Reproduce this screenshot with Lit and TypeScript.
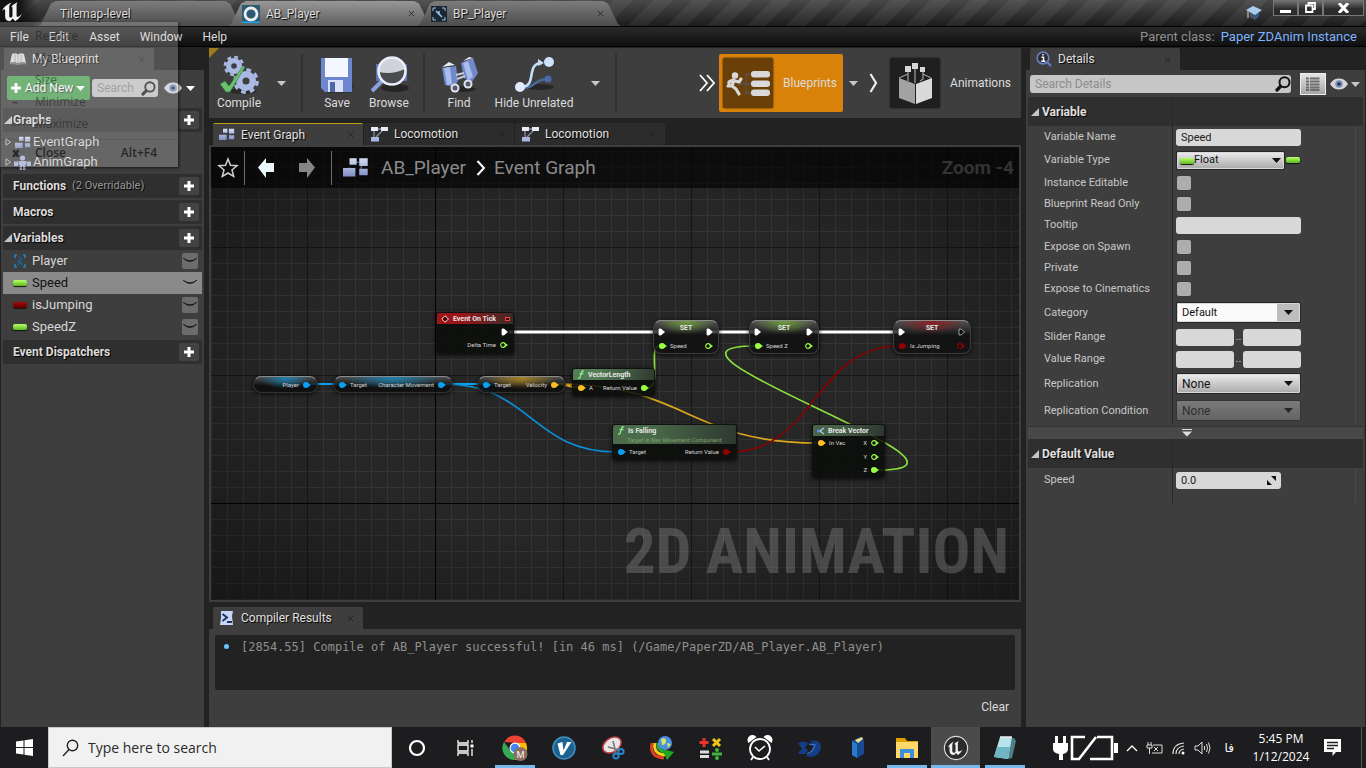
import { LitElement, html, svg, css, nothing } from 'lit';
import { customElement } from 'lit/decorators.js';
import { classMap } from 'lit/directives/class-map.js';

/* ---------- icons ---------- */
const unreal = (s: number) => html`<svg width=${s} height=${s} viewBox="0 0 24 24" aria-hidden="true"><path fill="#f2f2f2" d="M1 11C3 6 7 3 12 1.500C9.500 3.500 9 4.500 9 6V16.500C9 18 10.300 18.600 11.500 17.600L12.500 16.600V7.500C12.500 6 11.500 6 10.800 6.500C12.500 4 15.500 3 18 1C17 3 17 4 17 6V16C17 17.500 18.500 17.700 20 16.500L23 14C20.500 18.500 18 20.500 15.500 22L12.800 19.200L10 22C6.500 22 4.500 20 4.500 16.500V10C4.500 8.500 3 9 1 11Z"/></svg>`;
const plus = html`<svg width="12" height="12" viewBox="0 0 12 12" aria-hidden="true"><path fill="#fff" d="M4.500 1h3v3.500H11v3H7.500V11h-3V7.500H1v-3h3.500z"/></svg>`;
const caret = (c = '#c8c8c8') => html`<svg width="9" height="5" viewBox="0 0 9 5" aria-hidden="true"><path fill=${c} d="M0 0h9L4.500 5z"/></svg>`;
const tri = html`<svg width="8" height="8" viewBox="0 0 8 8" aria-hidden="true"><path fill="#c4c4c4" d="M8 0v8H0z"/></svg>`;
const lens = (s: number, c: string) => html`<svg width=${s} height=${s} viewBox="0 0 16 16" aria-hidden="true"><circle cx="9.500" cy="6.300" r="5" fill="none" stroke=${c} stroke-width="2"/><path d="M5.500 10.500L2 14" stroke=${c} stroke-width="3.200" stroke-linecap="round"/></svg>`;
const eye = html`<svg width="18" height="12" viewBox="0 0 18 12" aria-hidden="true"><path fill="#d6d6d6" d="M0 6C3 1.500 6 .5 9 .5s6 1 9 5.500c-3 4.500-6 5.500-9 5.500S3 10.500 0 6z"/><circle cx="9" cy="6" r="3.800" fill="#7d8fc0"/><circle cx="9" cy="6" r="1.800" fill="#2b3245"/></svg>`;
const closedEye = html`<svg width="14" height="6" viewBox="0 0 14 6" aria-hidden="true"><path d="M0 0Q7 7 14 0Q7 5.500 0 0z" fill="#111" stroke="#111" stroke-width=".6"/></svg>`;
const x = html`<svg width="7" height="7" viewBox="0 0 7 7" aria-hidden="true"><path d="M1 1l5 5M6 1L1 6" stroke="#1a1a1a" stroke-opacity=".75"/></svg>`;
const graphIcon = (w: number) => html`<svg width=${w} height=${w * 0.8} viewBox="0 0 20 16" aria-hidden="true"><defs><linearGradient id="gi" x2="0" y2="1"><stop stop-color="#d5dcf3"/><stop offset="1" stop-color="#7f8fc6"/></linearGradient></defs><path d="M8 4h6M14 6v5M5 8v3" stroke="#5b678f"/><g fill="url(#gi)"><path d="M5 1h5.500v5H5zM12.500 1H19v6h-6.500zM0 8.500h9.500V15H0zM12.500 9H19v5h-6.500z"/></g></svg>`;
const machineIcon = html`<svg width="18" height="16" viewBox="0 0 18 16" aria-hidden="true"><path d="M4 5v6M6 11l6-6M5 3h8" stroke="#8a8f9e" stroke-width="1.300"/><path fill="#e8ecf6" d="M1 1h7v4H1zM11 1h7v4h-7z"/><path fill="#a9b6df" d="M1 11h8v4.500H1z"/></svg>`;
const personIcon = html`<svg width="17" height="15" viewBox="0 0 17 15" aria-hidden="true"><g fill="#a9b4d8"><circle cx="8.500" cy="3" r="2.600"/><path d="M4.500 6h8v4h-1.200v5H9V11H8v4H5.700v-5H4.500zM0 6.500h4V11H0zM13 6.500h4V11h-4z"/></g></svg>`;
const bookIcon = html`<svg width="16" height="14" viewBox="0 0 16 14" aria-hidden="true"><path fill="#dcdcdc" d="M2 2q3-1.500 6 .5Q11 .5 14 2l2 9q-4-1.500-8 .5Q4 9.500 0 11z"/><path d="M5 2v8M8 3v8M11 2v8" stroke="#9a9a9a" stroke-width=".8"/><path fill="#777" d="M0 11q4-1.500 8 .5 4-2 8-.5v1.500q-4-1-8 .8-4-1.800-8-.8z"/></svg>`;
const playerIcon = html`<svg width="14" height="14" viewBox="0 0 14 14" aria-hidden="true"><path d="M2 4V1h2M10 1h2v3M12 10v3h-2M4 13H2v-3" fill="none" stroke="#1c9be6" stroke-width="1.200"/><path d="M6 3l2 2-1 3 3 3M4 8l3-1M5 11l2-2" stroke="#17628f" stroke-width="1.600" fill="none"/></svg>`;
const cap = html`<svg width="16" height="16" viewBox="0 0 16 16" aria-hidden="true"><path fill="#3b5878" d="M4 7v5l5 3 4-4V7z"/><path fill="#a9cdee" d="M0 5l7-4 9 4-7 5z"/><path d="M2 5.500V13" stroke="#d6b178" stroke-width="1.300"/></svg>`;
const detailsIcon = html`<svg width="16" height="16" viewBox="0 0 16 16" aria-hidden="true"><circle cx="7" cy="7" r="5.800" fill="#2b2b30" stroke="#6c7fc0" stroke-width="1.700"/><path d="M11.500 11.500L15 15" stroke="#5b78d0" stroke-width="2.400"/><path d="M7 3v1.600M5.500 6.300H7.500V10M5.300 10.300h4" stroke="#fff" stroke-width="1.500"/></svg>`;
const listIcon = html`<svg width="14" height="14" viewBox="0 0 14 14" aria-hidden="true"><path d="M0 1.500h3M4 1.500h9.500M0 4.500h3M4 4.500h9.500M0 7.500h3M4 7.500h9.500M0 10.500h3M4 10.500h9.500M0 13h3M4 13h9.500" stroke="#6e6e6e" stroke-width="1.800"/></svg>`;
const scriptIcon = html`<svg width="16" height="16" viewBox="0 0 16 16" aria-hidden="true"><path fill="#c7d6f7" d="M2 1h12l-1 5 1 9H1l1-7z"/><path d="M3.500 4L8 7.500 3.500 11" fill="none" stroke="#22335c" stroke-width="2"/><path d="M8 12h5" stroke="#22335c" stroke-width="2"/></svg>`;

const gear = (cx: number, cy: number, r: number) => svg`<g><circle cx=${cx} cy=${cy} r=${r * 0.54} fill="none" stroke="#aab8e4" stroke-width=${r * 0.52}/><circle cx=${cx} cy=${cy} r=${r * 0.9} fill="none" stroke="#aab8e4" stroke-width=${r * 0.26} stroke-dasharray="${r * 0.38} ${r * 0.3269}"/></g>`;
const compileIcon = html`<svg width="40" height="40" viewBox="0 0 40 40" aria-hidden="true"><ellipse cx="24" cy="36" rx="14" ry="3" fill="#1d1d1d" opacity=".6"/>${gear(15, 11, 10)}${gear(27, 26, 12.5)}<path fill="#6cc36f" stroke="#2f6f38" stroke-width=".6" d="M1 29l5-3 4 5L24 11l2 1L11 37H7z"/></svg>`;
const saveIcon = html`<svg width="36" height="40" viewBox="0 0 36 40" aria-hidden="true"><path fill="#222" opacity=".5" d="M8 30h28l-5 8H8z"/><path fill="#6d87cf" d="M2 3h31v34H6l-4-4z"/><path fill="#f4f7ff" d="M6 3h23v19H6z"/><path fill="#dbe2f5" d="M9 25h15v12H9z"/><path fill="#5068ab" d="M11 27h5v10h-5z"/></svg>`;
const browseIcon = html`<svg width="42" height="40" viewBox="0 0 42 40" aria-hidden="true"><ellipse cx="27" cy="33" rx="14" ry="4" fill="#1d1d1d" opacity=".7"/><path fill="#5c74b7" d="M8 9h31v17H8z"/><path d="M14 26L4 36" stroke="#8aa0dd" stroke-width="4"/><circle cx="24" cy="16" r="13.500" fill="#4b4c50"/><path fill="#cfd2da" d="M11 17a13 13 0 0 1 26-3Q24 20 11 17z"/><circle cx="24" cy="16" r="13.500" fill="none" stroke="#e9eefb" stroke-width="2.600"/></svg>`;
const findIcon = html`<svg width="40" height="40" viewBox="0 0 40 40" aria-hidden="true"><ellipse cx="24" cy="34" rx="13" ry="3" fill="#1d1d1d" opacity=".7"/><path fill="#7089c9" d="M3 13l14-2 2 15-4 6-9-2zM22 8l12-5 5 15-6 9-8-4z"/><path fill="#a9bdec" d="M5 13l6-1 2 17-5 1zM24 8l5-2 5 16-5 3z"/><path fill="#e8ebf5" d="M3 12l7-5 6 3zM24 6l6-4 4 1z"/><path d="M17 20l8-2M18 24l8-3" stroke="#c6cbe0" stroke-width="2"/><circle cx="16" cy="33" r="4.500" fill="#dfe3ef"/><circle cx="16" cy="33" r="2.500" fill="#555b6b"/><circle cx="29" cy="29" r="4.500" fill="#dfe3ef"/><circle cx="29" cy="29" r="2.500" fill="#555b6b"/></svg>`;
const hideIcon = html`<svg width="42" height="40" viewBox="0 0 42 40" aria-hidden="true"><ellipse cx="26" cy="32" rx="15" ry="3" fill="#1d1d1d" opacity=".7"/><path d="M10 33C22 33 20 25 34 24" fill="none" stroke="#4a6a96" stroke-width="2.500"/><circle cx="35" cy="24" r="3.600" fill="#4a68a8"/><path d="M8 32C25 32 12 8 29 8" fill="none" stroke="#c4ddf8" stroke-width="2.600"/><path d="M25 4l6 4-6 3z" fill="#c4ddf8"/><circle cx="7" cy="32" r="5" fill="#dfeafc"/><circle cx="36" cy="7" r="5" fill="#cfe2fc"/></svg>`;
const runIcon = html`<svg width="50" height="50" viewBox="0 0 50 50" aria-hidden="true"><path d="M15 26h8M28 16h-5v19h5M23 26h5" fill="none" stroke="#555" stroke-width="1.300"/><g fill="#d9d9d9"><circle cx="12" cy="17.500" r="3.200"/><rect x="28" y="13" width="19" height="6.500" rx="3"/><rect x="28" y="22.500" width="19" height="6.500" rx="3"/><rect x="28" y="31.500" width="19" height="6.500" rx="3"/></g><path d="M11 22l-2 6 4 3 3 5M9 28l-4 0M12 23l4 1 2-3M10 22l-4 2 0 3" fill="none" stroke="#d9d9d9" stroke-width="3.200" stroke-linecap="round" stroke-linejoin="round"/></svg>`;
const boxIcon = html`<svg width="50" height="50" viewBox="0 0 50 50" aria-hidden="true"><path d="M18 13v10M25 9v16M33 13v8l-3 2M9 20l9-4M41 20l-8-4" fill="none" stroke="#999" stroke-width="1.300"/><path fill="#d6d6d6" d="M15 8h6v6h-6zM22 5h6v6h-6zM30 9h5v5h-5z"/><path fill="#a2a2a2" d="M9 20l16 6v20L9 40z"/><path fill="#dadada" d="M42 20l-16 6v20l16-6z"/></svg>`;

/* ---------- graph data, in canvas coordinates ---------- */
type Pin = { kind: string; label?: string; color?: string; hollow?: boolean };
type Row = { left?: Pin; right?: Pin };
type Node = { id: string; type: 'pill' | 'set' | 'func'; x: number; y: number; w: number; h: number; tint: string; title?: string; sub?: string; icon?: string; rows: Row[] };
const BLUE = '#0aa0f0', YEL = '#fdc021', GRN = '#98ff45', RED = '#920101';
const v = (color: string, label = '', hollow = false): Pin => ({ kind: 'v', color, label, hollow });
const e = (hollow = false): Pin => ({ kind: 'e', hollow });
const nodes: Node[] = [
  { id: 'tick', type: 'func', x: 225, y: 165, w: 78, h: 42, tint: '#9c1519', title: 'Event On Tick', icon: 'event', rows: [{ right: e() }, { right: v(GRN, 'Delta Time', true) }] },
  { id: 'set1', type: 'set', x: 442, y: 173, w: 66, h: 34, tint: '#6f9f3c', title: 'SET', rows: [{ left: e(), right: e() }, { left: v(GRN, 'Speed'), right: v(GRN, '', true) }] },
  { id: 'set2', type: 'set', x: 538, y: 173, w: 70, h: 34, tint: '#6f9f3c', title: 'SET', rows: [{ left: e(), right: e() }, { left: v(GRN, 'Speed Z'), right: v(GRN, '', true) }] },
  { id: 'set3', type: 'set', x: 682, y: 173, w: 78, h: 34, tint: '#8b1d22', title: 'SET', rows: [{ left: e(), right: e(true) }, { left: v(RED, 'Is Jumping'), right: v(RED, '', true) }] },
  { id: 'player', type: 'pill', x: 42, y: 229, w: 65, h: 17, tint: '#1f7fae', rows: [{ right: v(BLUE, 'Player') }] },
  { id: 'move', type: 'pill', x: 122, y: 229, w: 120, h: 17, tint: '#1f7fae', rows: [{ left: v(BLUE, 'Target'), right: v(BLUE, 'Character Movement') }] },
  { id: 'vel', type: 'pill', x: 266, y: 229, w: 89, h: 17, tint: '#a88325', rows: [{ left: v(BLUE, 'Target'), right: v(YEL, 'Velocity') }] },
  { id: 'len', type: 'func', x: 361, y: 221, w: 83, h: 28, tint: '#557d55', title: 'VectorLength', icon: 'f', rows: [{ left: v(YEL, 'A'), right: v(GRN, 'Return Value') }] },
  { id: 'fall', type: 'func', x: 401, y: 277, w: 125, h: 36, tint: '#4a6c4a', title: 'Is Falling', sub: 'Target is Nav Movement Component', icon: 'f', rows: [{ left: v(BLUE, 'Target'), right: v(RED, 'Return Value') }] },
  { id: 'break', type: 'func', x: 601, y: 277, w: 73, h: 54, tint: '#486348', title: 'Break Vector', icon: 'break', rows: [{ left: v(YEL, 'In Vec'), right: v(GRN, 'X', true) }, { right: v(GRN, 'Y', true) }, { right: v(GRN, 'Z') }] },
];
const wires: [string, string, number][] = [
  ['M298 185H448', '#fff', 3], ['M502 185H545', '#fff', 3], ['M603 185H688', '#fff', 3],
  ['M100 237H127', BLUE, 2], ['M233 237H273', BLUE, 2],
  ['M233 237C320 237 320 305 406 305', '#0a8fd8', 1.7],
  ['M346 237C356 237 356 240 367 240', YEL, 2],
  ['M346 237C476 237 476 296 607 296', '#dba71c', 1.7],
  ['M437 241C451 241 437 199 448 199', '#8be03f', 1.7],
  ['M667 323C804 323 407 199 544 199', '#8be03f', 1.7],
  ['M519 305C604 305 604 199 688 199', '#840404', 1.7],
];

@customElement('graph-canvas')
class GraphCanvas extends LitElement {
  static styles = css`
    :host { display: block; position: relative; overflow: hidden; background-color: #262626; min-height: 0;
      background-image:
        radial-gradient(ellipse at center, transparent 55%, rgba(0,0,0,.42) 100%),
        linear-gradient(#000, #000), linear-gradient(#000, #000),
        repeating-linear-gradient(90deg, transparent 0 96px, #161616 96px 97px, transparent 97px 128px),
        repeating-linear-gradient(180deg, transparent 0 100px, #161616 100px 101px, transparent 101px 128px),
        repeating-linear-gradient(90deg, #343434 0 1px, transparent 1px 16px),
        repeating-linear-gradient(180deg, transparent 0 4px, #343434 4px 5px, transparent 5px 16px);
      background-size: auto, 1px 100%, 100% 1px, auto, auto, auto, auto;
      background-position: 0 0, 224px 0, 0 356px, 0 0, 0 0, 0 0, 0 0;
      background-repeat: no-repeat, no-repeat, no-repeat, repeat, repeat, repeat, repeat; }
    .wires { position: absolute; inset: 0; width: 100%; height: 100%; }
    .mark { position: absolute; right: 10px; bottom: 12px; font: 700 63px/72px "Roboto Condensed", "Liberation Sans Narrow", "Roboto", sans-serif; color: rgba(160,160,160,.32); white-space: nowrap; }
    .crumbs { position: relative; z-index: 2; display: flex; align-items: center; height: 41px; background: rgba(0,0,0,.62); color: #8b8b8b; font: 19px/24px "Roboto", sans-serif; }
    .crumbs button { border: 0; padding: 0; background: none; display: grid; place-items: center; width: 33px; height: 40px; color: inherit; font: inherit; }
    .crumbs .arrow { width: 41px; }
    .crumbs .link { width: auto; }
    .rule { width: 1px; height: 34px; background: #6b6b6b; }
    .arrow + .rule { margin-left: 4px; }
    .gi { margin: 0 12px 0 11px; display: flex; }
    .sep { margin: 0 8px 0 10px; }
    .zoom { margin-left: auto; padding-right: 5px; font-weight: 700; color: #333; }
    .node { position: absolute; box-sizing: border-box; color: #d4d4d4; font: 6px/14px "Roboto", sans-serif; box-shadow: 0 1px 4px rgba(0,0,0,.8); display: flex; flex-direction: column; overflow: hidden; white-space: nowrap; }
    .func { border-radius: 3px; background: rgba(10,13,10,.86); border: 1px solid #111; }
    .head { background: linear-gradient(100deg, var(--tint) 30%, #2a302b 110%); display: flex; align-items: center; gap: 3px; height: 11px; flex: none; padding: 0 3px 0 4px; font-weight: 700; font-size: 7px; line-height: 10px; color: #e6e6e6; }
    .head .end { margin-left: auto; width: 3px; height: 2px; border: 1px solid #ff3a3a; background: #300; }
    .sub { background: linear-gradient(100deg, var(--tint) 30%, #2a302b 110%); height: 8px; line-height: 8px; padding-left: 14px; font-style: italic; color: #83a06c; }
    .rows { display: flex; flex-direction: column; justify-content: space-evenly; flex: 1; padding: 0 5px 0 4px; }
    .row { display: flex; justify-content: space-between; align-items: center; line-height: 12px; height: 12px; }
    .pin { display: flex; align-items: center; gap: 3px; }
    .set { border-radius: 8px; border: 1px solid #3c3c3c; border-top-color: #8b8b8b; background: radial-gradient(ellipse 45% 40% at 50% 0, var(--tint), transparent), linear-gradient(rgba(95,95,95,.8), rgba(16,16,16,.85) 45%); }
    .set .rows { padding-top: 4px; }
    .set .name { position: absolute; left: 0; right: 0; top: 0; text-align: center; font-weight: 700; font-size: 7px; color: #e6e6e6; }
    .pill { border-radius: 9px; border: 1px solid #333; border-top-color: #8b8b8b; background: radial-gradient(ellipse 42% 75% at 50% 5%, var(--tint), transparent), linear-gradient(rgba(85,85,85,.8), rgba(12,12,12,.85) 60%); }
    .pill .rows { padding: 0 6px 0 4px; }
  `;
  pinIcon(p: Pin) {
    if (p.kind === 'e') return html`<svg width="7" height="8" viewBox="0 0 7 8"><path d="M1 1h2l3.500 3L3 7H1z" fill=${p.hollow ? '#111' : '#fff'} stroke=${p.hollow ? '#bbb' : '#fff'} stroke-width=".8"/></svg>`;
    return html`<svg width="9" height="8" viewBox="0 0 9 8"><path d="M6 2l3 2-3 2z" fill=${p.color!}/><circle cx="4" cy="4" r=${p.hollow ? 2.3 : 3} fill=${p.hollow ? '#0c0c0c' : p.color!} stroke=${p.color!} stroke-width=${p.hollow ? 1.2 : 0}/></svg>`;
  }
  headIcon(k?: string) {
    if (k === 'event') return html`<svg width="9" height="8" viewBox="0 0 9 8"><path d="M4 .8L7.500 4 4 7.200 .8 4z" fill="#500" stroke="#f0dada"/></svg>`;
    if (k === 'break') return html`<svg width="8" height="8" viewBox="0 0 8 8"><path d="M0 4h4" stroke="#5b8fe8" stroke-width="2.400"/><path d="M3 4l4-3M3 4l4 3" stroke="#a9c8f5" stroke-width="1.200"/></svg>`;
    return html`<svg width="8" height="9" viewBox="0 0 8 9"><path d="M7 1.200C5 0 4.600 2 4 4.500S3 9 1 7.800M2.500 3.700h4" fill="none" stroke="#8dff8d" stroke-width="1.100"/></svg>`;
  }
  render() {
    return html`
      <svg class="wires" aria-hidden="true">${wires.map(([d, c, w]) => svg`<path d=${d} stroke=${c} stroke-width=${w} fill="none"/>`)}</svg>
      <div class="crumbs">
        <button aria-label="Favourite"><svg width="22" height="22" viewBox="0 0 22 22"><path d="M11 2l2.500 6.300 6.500.4-5 4.200 1.700 6.600L11 16l-5.700 3.500L7 12.900 2 8.700l6.500-.4z" fill="none" stroke="#d0d0d0" stroke-width="1.500"/></svg></button>
        <span class="rule"></span>
        <button class="arrow" aria-label="Back"><svg width="18" height="22" viewBox="0 0 18 22"><path d="M9 1v5h8v9H9v6L1 10.500z" fill="#eaf7fa"/></svg></button>
        <button class="arrow" aria-label="Forward"><svg width="18" height="22" viewBox="0 0 18 22"><path d="M9 1v5H1v9h8v6l8-10.500z" fill="#858585"/></svg></button>
        <span class="rule"></span>
        <span class="gi">${graphIcon(26)}</span>
        <button class="link">AB_Player</button>
        <svg class="sep" width="10" height="16" viewBox="0 0 10 16"><path d="M1.500 1l6.500 7-6.500 7" fill="none" stroke="#fff" stroke-width="2"/></svg>
        <button class="link">Event Graph</button>
        <span class="zoom">Zoom -4</span>
      </div>
      <div class="mark">2D ANIMATION</div>
      ${nodes.map(n => html`<div class="node ${n.type}" style="left:${n.x}px;top:${n.y}px;width:${n.w}px;height:${n.h}px;--tint:${n.tint}">
        ${n.type === 'func' ? html`<div class="head">${this.headIcon(n.icon)}${n.title}${n.icon === 'event' ? html`<span class="end"></span>` : nothing}</div>` : nothing}
        ${n.sub ? html`<div class="sub">${n.sub}</div>` : nothing}
        ${n.type === 'set' ? html`<div class="name">${n.title}</div>` : nothing}
        <div class="rows">${n.rows.map(r => html`<div class="row">
          <span class="pin">${r.left ? html`${this.pinIcon(r.left)}${r.left.label}` : nothing}</span>
          <span class="pin">${r.right ? html`${r.right.label}${this.pinIcon(r.right)}` : nothing}</span>
        </div>`)}</div>
      </div>`)}`;
  }
}

/* ---------- shared control looks ---------- */
const base = css`
  * { box-sizing: border-box; }
  button { border: 0; padding: 0; background: none; color: inherit; font: inherit; }
  input, select { font: inherit; margin: 0; }
  input::placeholder { color: #8d8d8d; opacity: 1; }
  svg { display: block; flex: none; }
  .tabs { display: flex; align-items: flex-end; padding-left: 4px; gap: 2px; }
  .tab { display: flex; align-items: center; width: 150px; height: 22px; padding: 0 9px 0 6px; background: #3e3e3e; border-radius: 2px 2px 0 0; color: #e0e0e0; text-shadow: 1px 1px 1px #000; }
  .tab .t { margin-left: 6px; margin-right: auto; }
`;

@customElement('my-blueprint')
class MyBlueprint extends LitElement {
  static styles = [base, css`
    :host { display: flex; flex-direction: column; width: 204px; padding-top: 1px; color: #d6d6d6; font: 13px/20px "Roboto", sans-serif; }
    .tab { font-size: 12px; }
    .panel { flex: 1; background: #3e3e3e; margin-left: 1px; padding: 6px 2px; display: flex; flex-direction: column; gap: 2px; }
    .tools { display: flex; align-items: center; height: 24px; padding-left: 4px; margin-bottom: 6px; gap: 2px; }
    .add { display: flex; align-items: center; gap: 3px; height: 24px; width: 83px; padding: 0 3px; background: #4fa556; border-radius: 2px; color: #fff; font-size: 12px; text-shadow: 1px 1px 1px #333; }
    .find { display: flex; align-items: center; width: 66px; height: 18px; background: #c6c6c6; border-radius: 3px; padding: 0 1px 0 5px; margin-right: 4px; }
    .find input { width: 44px; border: 0; padding: 0; background: none; font-size: 12px; }
    .view { display: flex; align-items: center; gap: 4px; }
    .head { display: flex; align-items: center; height: 24px; background: #2f2f2f; border-radius: 2px; padding: 0 3px 0 1px; color: #dcdcdc; font-weight: 700; font-size: 12px; text-shadow: 1px 1px 1px #000; }
    .head .a { width: 9px; }
    .head small { font: 11px/20px "Roboto", sans-serif; color: #999; margin-left: 6px; }
    .head button { margin-left: auto; width: 20px; height: 18px; display: grid; place-items: center; background: #434343; border-radius: 2px; }
    .row { display: flex; align-items: center; height: 22px; line-height: 22px; padding: 0 4px 0 10px; gap: 5px; }
    .row .ic { width: 14px; display: flex; justify-content: center; }
    .row .vis { margin-left: auto; width: 16px; height: 16px; display: grid; place-items: center; background: #6c6c6c; border-radius: 2px; }
    .graph { height: 20px; padding-left: 2px; gap: 2px; text-shadow: 1px 1px 1px #333; }
    .graph .ic { width: 17px; }
    .rows { display: flex; flex-direction: column; margin-top: -2px; }
    .sel { background: #8a8a8a; color: #111; }
    .sel .vis { background: none; }
    .pillv { width: 14px; height: 6px; border-radius: 2px; box-shadow: 0 1px 1px #111; }
    .green { background: linear-gradient(#b8ff66, #5cb91e); }
    .red { background: linear-gradient(#a50b0b, #5c0000); }
  `];
  head(t: string, open = false, extra = '') {
    return html`<div class="head"><span class="a">${open ? tri : nothing}</span>${t}${extra ? html`<small>${extra}</small>` : nothing}<button aria-label="Add ${t}">${plus}</button></div>`;
  }
  render() {
    const out = html`<svg width="7" height="8" viewBox="0 0 7 8"><path d="M1 .8l4.500 3.200L1 7.200z" fill="none" stroke="#bbb"/></svg>`;
    const vars = [['Player', 'p'], ['Speed', 'green'], ['isJumping', 'red'], ['SpeedZ', 'green']];
    return html`
      <div class="tabs"><div class="tab">${bookIcon}<span class="t">My Blueprint</span>${x}</div></div>
      <div class="panel">
        <div class="tools">
          <button class="add">${plus}<span>Add New</span>${caret('#fff')}</button>
          <label class="find"><input aria-label="Search" placeholder="Search">${lens(15, '#222')}</label>
          <button class="view" aria-label="View options">${eye}${caret('#fff')}</button>
        </div>
        ${this.head('Graphs', true)}
        <div class="rows">
          <div class="row graph">${out}<span class="ic">${graphIcon(16)}</span>EventGraph</div>
          <div class="row graph">${out}<span class="ic">${personIcon}</span>AnimGraph</div>
        </div>
        ${this.head('Functions', false, '(2 Overridable)')}
        ${this.head('Macros')}
        ${this.head('Variables', true)}
        <div class="rows">${vars.map(([n, k]) => html`<div class=${classMap({ row: true, sel: n === 'Speed' })}>
          <span class="ic">${k === 'p' ? playerIcon : html`<span class="pillv ${k}"></span>`}</span>${n}<button class="vis" aria-label="Toggle ${n}">${closedEye}</button></div>`)}</div>
        ${this.head('Event Dispatchers')}
      </div>`;
  }
}

@customElement('details-panel')
class DetailsPanel extends LitElement {
  static styles = [base, css`
    :host { display: flex; flex-direction: column; width: 340px; padding-top: 1px; color: #c8c8c8; font: 11px/16px "Roboto", sans-serif; }
    .tab { font-size: 12px; }
    .panel { flex: 1; background: #3e3e3e; padding: 3px 2px 0 2px; margin-right: 1px; }
    .tools { display: flex; align-items: center; height: 22px; padding: 0 3px 0 2px; margin-bottom: 2px; }
    .find { flex: 1; display: flex; align-items: center; height: 18px; background: #c6c6c6; border-radius: 3px; padding: 0 0 0 5px; margin-right: 9px; }
    .find input { flex: 1; border: 0; padding: 0; background: none; font-size: 12px; }
    .mat { width: 26px; height: 22px; display: grid; place-items: center; border: 1px solid #eee; background: linear-gradient(#e4e4e4, #a5a5a5); margin-right: 4px; }
    .view { display: flex; align-items: center; gap: 3px; }
    .cat { display: flex; align-items: center; height: 29px; background: linear-gradient(#272727, #272727) 144px 0 / 1px 100% no-repeat #2f2f2f; border-radius: 2px 2px 0 0; color: #e0e0e0; font: 700 12px/16px "Roboto", sans-serif; text-shadow: 1px 1px 1px #000; }
    .cat h2 { font: inherit; margin: 0; display: flex; align-items: center; gap: 3px; padding-left: 3px; }
    .props { background: linear-gradient(#272727, #272727) 144px 0 / 1px 100% no-repeat, linear-gradient(#494949, #494949) 327px 0 / 1px 100% no-repeat; }
    .row { display: grid; grid-template-columns: 132px 1fr; padding-left: 16px; align-items: center; height: 22px; }
    .check { height: 21px; }
    .mid { height: 24px; }
    .tall { height: 27px; }
    .val { display: flex; align-items: center; }
    .text { width: 125px; height: 17px; border: 0; border-radius: 3px; background: #d8d8d8; color: #222; padding: 0 5px; }
    .half { width: 58px; }
    .dots { width: 9px; line-height: 8px; text-align: center; }
    input[type=checkbox] { appearance: none; width: 14px; height: 14px; background: #adadad; border-radius: 2px; margin-left: 1px; }
    .sel { position: relative; width: 125px; height: 21px; }
    .sel select { appearance: none; width: 100%; height: 100%; border: 1px solid #262626; border-radius: 2px; background: linear-gradient(#ececec, #a9a9a9); color: #111; padding: 0 5px; box-shadow: inset 0 0 0 1px #d8d8d8; font-size: 12px; }
    .sel svg { position: absolute; right: 8px; top: 8px; pointer-events: none; }
    .float { width: 109px; height: 19px; }
    .float svg { right: 4px; top: 7px; }
    .sel.float select { padding-left: 17px; font-size: 11px; }
    .float .pillv { position: absolute; left: 3px; top: 7px; }
    .sel.edit select { background: linear-gradient(90deg, #fafafa 100px, #bdbdbd 100px); font-size: 11px; }
    .off { opacity: .5; }
    .sel.off select { box-shadow: none; }
    .pillv { width: 14px; height: 6px; border-radius: 2px; background: linear-gradient(#b8ff66, #5cb91e); box-shadow: 0 1px 1px #111; margin-left: 1px; }
    .more { display: grid; place-items: center; width: 100%; height: 13px; margin-top: 2px; background: #484848; border-top: 1px solid #333; }
    .more svg { margin-right: 17px; }
    .num { position: relative; display: flex; align-items: center; }
    .num svg { position: absolute; right: 5px; }
    .w { width: 105px; }
    .end { height: 35px; align-items: start; padding-top: 4px; }
  `];
  check(l: string, id: string) { return html`<div class="row check"><label for=${id}>${l}</label><span class="val"><input type="checkbox" id=${id}></span></div>`; }
  range(l: string, id: string) { return html`<div class="row"><label for=${id}>${l}</label><span class="val"><input class="text half" id=${id}><span class="dots">..</span><input class="text half" aria-label="${l} maximum"></span></div>`; }
  render() {
    return html`
      <div class="tabs"><div class="tab">${detailsIcon}<span class="t">Details</span>${x}</div></div>
      <div class="panel">
        <div class="tools">
          <label class="find"><input aria-label="Search Details" placeholder="Search Details">${lens(16, '#111')}</label>
          <button class="mat" aria-label="Property matrix">${listIcon}</button>
          <button class="view" aria-label="View options">${eye}${caret()}</button>
        </div>
        <div class="props">
          <div class="cat"><h2>${tri}Variable</h2></div>
          <div class="row"><label for="vn">Variable Name</label><span class="val"><input class="text" id="vn" value="Speed"></span></div>
          <div class="row mid"><label for="vt">Variable Type</label><span class="val"><span class="sel float"><select id="vt"><option>Float</option></select><span class="pillv"></span>${caret('#111')}</span><span class="pillv"></span></span></div>
          ${this.check('Instance Editable', 'ie')}${this.check('Blueprint Read Only', 'br')}
          <div class="row"><label for="tt">Tooltip</label><span class="val"><input class="text" id="tt"></span></div>
          ${this.check('Expose on Spawn', 'es')}${this.check('Private', 'pr')}${this.check('Expose to Cinematics', 'ec')}
          <div class="row tall"><label for="ct">Category</label><span class="val"><span class="sel edit"><select id="ct"><option>Default</option></select>${caret('#111')}</span></span></div>
          ${this.range('Slider Range', 'sr')}${this.range('Value Range', 'vr')}
          <div class="row tall"><label for="rp">Replication</label><span class="val"><span class="sel"><select id="rp"><option>None</option></select>${caret('#111')}</span></span></div>
          <div class="row tall"><label for="rc">Replication Condition</label><span class="val"><span class="sel off"><select id="rc" disabled><option>None</option></select>${caret('#111')}</span></span></div>
        </div>
        <button class="more" aria-label="Show advanced"><svg width="10" height="8" viewBox="0 0 10 8"><path fill="#ddd" d="M0 0h10v1H0zM0 2.500h10L5 7.500z"/></svg></button>
        <div class="props">
          <div class="cat"><h2>${tri}Default Value</h2></div>
          <div class="row end"><label for="dv">Speed</label><span class="val"><span class="num"><input class="text w" id="dv" value="0.0"><svg width="9" height="9" viewBox="0 0 9 9"><path fill="#111" d="M4 0h5v5zM0 4l5 5H0z"/></svg></span></span></div>
        </div>
      </div>`;
  }
}

@customElement('task-bar')
class TaskBar extends LitElement {
  static styles = [base, css`
    :host { display: flex; height: 41px; background: #1d1c1e; color: #fff; font: 12px/18px "Open Sans", sans-serif; }
    .start { width: 48px; display: grid; place-items: center; }
    .find { width: 344px; display: flex; align-items: center; gap: 9px; padding-left: 13px; background: #f1f1f1; border: 1px solid #c9c9c9; }
    .find input { flex: 1; border: 0; padding: 0; background: none; font: 14px/20px "Open Sans", sans-serif; }
    .find input::placeholder { color: #2b2b2b; }
    .app { width: 49px; display: grid; place-items: center; }
    .run { background: linear-gradient(#76b9ed, #76b9ed) 50% 100% / 40px 3px no-repeat; }
    .act { background: linear-gradient(#76b9ed, #76b9ed) 0 100% / 100% 3px no-repeat #4b4b4b; }
    .tray { margin-left: auto; display: flex; align-items: center; gap: 8px; padding-right: 4px; }
    .clock { text-align: center; width: 62px; margin: 0 4px 0 8px; white-space: nowrap; }
    .lang { font-family: "DejaVu Sans", sans-serif; margin-left: 6px; }
    .edge { width: 1px; height: 41px; background: #555; margin-left: 12px; }
  `];
  render() {
    const I = (b: unknown) => html`<svg width="26" height="26" viewBox="0 0 26 26" aria-hidden="true">${b}</svg>`;
    const apps: [string, unknown, string][] = [
      ['Cortana', I(svg`<circle cx="13" cy="13" r="7" fill="none" stroke="#fff" stroke-width="2.200"/>`), ''],
      ['Task View', I(svg`<path d="M5 5v3h10V5M5 21v-3h10v3M5 10h10v6H5zM19 5v3M19 14v7" fill="none" stroke="#fff" stroke-width="1.300"/><path d="M17.500 9.500h3v3h-3z" fill="#fff"/>`), ''],
      ['Chrome', I(svg`<path fill="#ea4335" d="M2.200 7A12 12 0 0 1 24 8H13z"/><path fill="#34a853" d="M2 7a12 12 0 0 0 11 18l4-8-9-2z"/><path fill="#fbbc05" d="M24 8a12 12 0 0 1-11 17l6-12-6-5z"/><circle cx="13" cy="13" r="5.500" fill="#fff"/><circle cx="13" cy="13" r="4.300" fill="#4285f4"/><circle cx="18.500" cy="19" r="7" fill="#8d6e63"/><text x="18.500" y="22.500" text-anchor="middle" font-size="9" fill="#fff">M</text>`), 'run'],
      ['V', I(svg`<circle cx="13" cy="13" r="11" fill="#1b6290" stroke="#3f8fc1" stroke-width="1.500"/><path d="M6.500 8.500l5-1.500 1 8.500L16 7h4.500L12 20H9.500z" fill="#fff"/>`), ''],
      ['Snipping Tool', I(svg`<ellipse cx="12" cy="10" rx="10" ry="7" transform="rotate(-35 12 10)" fill="#e9e4e6" stroke="#c44048" stroke-width="1.500"/><path d="M13 6l3 12M8 12l11 3" stroke="#777" stroke-width="1.500"/><circle cx="16" cy="21" r="2.600" fill="none" stroke="#2a86cc" stroke-width="2"/><circle cx="21" cy="16.500" r="2.600" fill="none" stroke="#2a86cc" stroke-width="2"/>`), ''],
      ['Download Manager', I(svg`<path d="M3 8q-3 14 12 15" fill="none" stroke="#e33d2a" stroke-width="3"/><path d="M6 8q-2 11 10 12" fill="none" stroke="#f2d21c" stroke-width="3"/><path d="M9 8q-1 8 8 9" fill="none" stroke="#28a83b" stroke-width="3"/><circle cx="16" cy="8" r="7" fill="#4a8fe0"/><path d="M12 4q5-2 5 2t-4 4zM18 8l4 1-3 4z" fill="#d8e36a"/><path d="M13 14l12 3-7 8z" fill="#20a522"/>`), ''],
      ['Calculator', I(svg`<path d="M6 3v9M1.500 7.500h9" stroke="#e8322c" stroke-width="3"/><path d="M15 4l7 7M22 4l-7 7" stroke="#f1c61b" stroke-width="3"/><path d="M2 17h9M2 21.500h9" stroke="#ddd" stroke-width="3"/><path d="M14 19h10" stroke="#3eb63e" stroke-width="3"/><circle cx="19" cy="15" r="2" fill="#3eb63e"/><circle cx="19" cy="23" r="2" fill="#3eb63e"/>`), ''],
      ['Clock', I(svg`<circle cx="13" cy="14" r="10" fill="none" stroke="#fff" stroke-width="1.800"/><path d="M8 12l4 4 6-5" fill="none" stroke="#fff" stroke-width="1.600"/><path d="M1.500 8a5 5 0 0 1 8-6zM24.500 8a5 5 0 0 0-8-6z" fill="#fff"/><path d="M6 22l-2 3M20 22l2 3" stroke="#fff" stroke-width="1.800"/>`), ''],
      ['Drive', I(svg`<path fill="#143f86" d="M2 8q6-3 10 0l-3 5 3 2-3 4q-5 1-7-1l4-4zM14 6q11-2 11 6-1 9-10 10l-6-1 7-4 3-6z"/><path d="M13 9l6 1-3 6-5 3" fill="none" stroke="#3572c9" stroke-width="1.400"/>`), ''],
      ['Book', I(svg`<path fill="#174a92" d="M7 6l8-4 4 3v14l-7 4-5-3z"/><path fill="#2a79cf" d="M7 6l5 3v14l-5-3z"/><path fill="#f5dc95" d="M10 5l7-3 1 2-5 4z"/>`), ''],
      ['File Explorer', I(svg`<path fill="#e0a100" d="M2 3h9l2 3h11v3H2z"/><path fill="#ffd867" d="M2 7h22v16H2z"/><path fill="#3c8fdc" d="M6 23v-9h14v9h-4v-5h-6v5z"/>`), 'run'],
      ['Unreal Editor', html`<svg width="26" height="26" viewBox="0 0 28 28" aria-hidden="true"><circle cx="14" cy="14" r="12.500" fill="#2b2b2b" stroke="#ddd" stroke-width="1.200"/><path fill="#f2f2f2" d="M5 14q2-5 7-7-2 1.500-2 3.500v7q0 2 2.500 1.500l1-1V11q0-1.500-1.500-1 2-2.500 5-3.500-1 1.200-1 3v7.500q1 2 5-1-2 4-5 5.500l-2-2-2 2q-5 0-5-4.500v-4q0-1.500-2 1z"/></svg>`, 'act'],
      ['Notepad', I(svg`<path fill="#4d7f86" d="M10 3h12l2 3-4 17-4 1z"/><path fill="#b9e3ea" d="M8 2h12l-4 22-14-2z"/><path fill="#6fb4c2" d="M5 12l13 0-2 12-14-2z"/><path d="M8 2h12" stroke="#eee" stroke-width="1.500"/>`), 'run'],
    ];
    return html`
      <button class="start" aria-label="Start"><svg width="17" height="17" viewBox="0 0 17 17"><path fill="#fff" d="M0 2.500l7.500-1V8H0zM8.500 1.300L17 0v8H8.500zM0 9h7.500v6.500l-7.500-1zM8.500 9H17v8l-8.500-1.300z"/></svg></button>
      <label class="find"><svg width="17" height="18" viewBox="0 0 17 18"><circle cx="10.500" cy="6.500" r="5.200" fill="none" stroke="#222" stroke-width="1.400"/><path d="M7 10.500L1 17" stroke="#222" stroke-width="1.400"/></svg><input aria-label="Type here to search" placeholder="Type here to search"></label>
      ${apps.map(([n, i, c]) => html`<button class="app ${c}" aria-label=${n}>${i}</button>`)}
      <div class="tray">
        <svg width="66" height="26" viewBox="0 0 66 26"><path fill="#fff" d="M1 8h2V1h3v7h5V1h3v7h2v6q0 4-5 5v6H7v-6q-6-1-6-5z"/><path d="M33 2H20v22h8M45 2h15v22H38M44 2L27 24" fill="none" stroke="#fff" stroke-width="2.600"/><path fill="#fff" d="M62 8h4v10h-4z"/></svg>
        <svg width="12" height="8" viewBox="0 0 12 8"><path d="M1 7l5-5 5 5" fill="none" stroke="#fff" stroke-width="1.300"/></svg>
        <svg width="17" height="14" viewBox="0 0 17 14"><path d="M2 1v3M5 1v3M1 4h5v3H1zM3.500 7v6M7 4h9v8H6M8 6l4 4M12 6l-4 4" fill="none" stroke="#ddd"/></svg>
        <svg width="15" height="14" viewBox="0 0 15 14"><path d="M2 13Q2 3 13 2M5 13Q5 6 13 5M8 13Q8 9 13 8" fill="none" stroke="#ddd" stroke-width="1.200"/><circle cx="12" cy="12" r="1.500" fill="#fff"/></svg>
        <svg width="17" height="14" viewBox="0 0 17 14"><path d="M1 5h3l4-4v12L4 9H1zM10.500 5v4M12.500 3q2 4 0 8M14.500 1.500q3 5.500 0 11" fill="none" stroke="#ddd"/></svg>
        <span class="lang">فا</span>
        <div class="clock">5:45 PM<br>1/12/2024</div>
        <svg width="17" height="17" viewBox="0 0 17 17"><path fill="#fff" d="M0 0h17v13h-5l-3.500 4v-4H0z"/><path d="M3 3.500h11M3 6.500h11M3 9.500h7" stroke="#222" stroke-width="1.300"/></svg>
        <span class="edge"></span>
      </div>`;
  }
}

@customElement('app-root')
class AppRoot extends LitElement {
  static styles = [base, css`
    :host { display: flex; flex-direction: column; height: 100vh; position: relative; background: #222; color: #dcdcdc; font: 12px/16px "Roboto", sans-serif; overflow: hidden; }
    .title { display: flex; height: 27px; flex: none; border-bottom: 1px solid #000; background: linear-gradient(rgba(86,86,86,.75), rgba(25,25,25,.7)), repeating-linear-gradient(135deg, #222 0 14px, #4a4a4a 14px 28px); }
    .logo { width: 38px; padding: 1px 0 0 1px; background: linear-gradient(90deg, #111 50%, transparent); }
    .doc { display: flex; align-items: center; gap: 6px; width: 205px; height: 25px; margin: 1px -15px 0 0; padding-left: 14px; background: linear-gradient(#7c7c7c, #4c4c4c); clip-path: polygon(0 100%, 3px 92%, 13px 10%, 18px 0, calc(100% - 18px) 0, calc(100% - 13px) 10%, calc(100% - 3px) 92%, 100% 100%); text-shadow: 1px 1px 1px #000; }
    .doc .t { flex: 1; text-align: left; }
    .doc svg:last-child { margin-right: 17px; }
    .doc.on { background: linear-gradient(#979797, #5e5e5e); }
    .doc.bp { width: 204px; }
    .doc.plain { padding-left: 22px; }
    .wins { margin-left: auto; display: flex; align-items: flex-start; }
    .wins .cap { margin: 5px 11px 0 0; }
    .wins button { height: 16px; width: 25px; display: grid; place-items: center; border: 1px solid #777; border-top: 0; background: linear-gradient(#777, #2c2c2c 60%); }
    .wins .close { width: 41px; margin-right: 2px; }
    .menu { display: flex; align-items: center; height: 20px; flex: none; padding: 0 9px 0 10px; background: linear-gradient(#2a2a2a, #0f0f0f); border-bottom: 1px solid #000; font-size: 12px; gap: 20px; }
    .menu .parent { margin-left: auto; color: #8f8f8f; font-size: 13px; display: flex; gap: 6px; }
    .menu a { color: #7db4ff; text-decoration: none; }
    .main { flex: 1; min-height: 0; display: flex; gap: 5px; }
    .mid { flex: 1; min-width: 0; display: flex; flex-direction: column; padding-top: 1px; }
    .bar { position: relative; display: flex; align-items: center; height: 70px; background: #3e3e3e; padding-right: 10px; text-shadow: 1px 1px 1px #000; }
    .bar::before { content: ""; position: absolute; left: 0; top: 0; border-top: 10px solid #a17a1b; border-right: 10px solid transparent; }
    .tool { width: 52px; display: flex; flex-direction: column; align-items: center; white-space: nowrap; }
    .wide { width: 60px; }
    .xwide { width: 98px; }
    .drop { width: 24px; height: 40px; display: grid; place-items: center; }
    .line { width: 2px; height: 58px; background: #303030; margin: 0 8px; }
    .mode { display: flex; align-items: center; gap: 10px; height: 58px; }
    .mode i { background: #1f1f1f; border-radius: 2px; box-shadow: 0 0 2px #111; }
    .bp-mode { width: 124px; padding-left: 4px; background: #d9820a; border-radius: 2px; margin-left: 4px; }
    .bp-mode i { background: #6a3f08; }
    .grow { margin-left: auto; }
    .next { margin: 0 12px 0 6px; }
    .drop.small { width: 20px; }
    .gtabs { height: 27px; gap: 1px; }
    .gtabs .tab { background: #2c2c2c; }
    .gtabs .tab.on { background: #3e3e3e; border-top: 1px solid #bfa316; }
    .frame { flex: 1; min-height: 0; border: 2px solid #3e3e3e; display: flex; }
    .frame graph-canvas { flex: 1; }
    .ctabs { height: 27px; }
    .results { height: 98px; background: #3e3e3e; padding: 6px; display: flex; flex-direction: column; }
    .log { height: 55px; background: #222; border-radius: 2px; padding: 3px 0 0 9px; color: #8f8f8f; font: 12px/18px "DejaVu Sans Mono", monospace; display: flex; gap: 12px; white-space: nowrap; }
    .log b { width: 5px; height: 5px; border-radius: 3px; background: #6cc4ff; margin-top: 6px; }
    .clear { margin: 9px 6px 0 auto; }
    .ghost { position: absolute; left: 0; top: 22px; width: 178px; height: 145px; padding: 3px 0; background: rgba(225,225,225,.25); box-shadow: 1px 1px 3px rgba(0,0,0,.6); font: 12px/22px "Open Sans", sans-serif; color: rgba(20,20,20,.5); pointer-events: none; display: flex; flex-direction: column; }
    .ghost span { display: grid; grid-template-columns: 23px 1fr auto; padding: 0 21px 0 12px; }
    .ghost em { font-style: normal; }
    .ghost .x { margin-top: 4px; border-top: 1px solid rgba(0,0,0,.1); padding-top: 2px; color: rgba(20,20,20,.8); font-weight: 600; }
  `];
  render() {
    const tool = (i: unknown, l: string, c = '') => html`<button class="tool ${c}">${i}<span>${l}</span></button>`;
    return html`
      <header class="title">
        <span class="logo">${unreal(22)}</span>
        <button class="doc plain"><span class="t">Tilemap-level</span></button>
        <button class="doc on bp">${html`<svg width="18" height="18" viewBox="0 0 18 18"><path fill="#2d5a74" d="M0 0h18v18H0z"/><circle cx="9" cy="9" r="6" fill="none" stroke="#eee" stroke-width="2.800"/><path fill="#19a5ee" d="M0 16.500h18V18H0z"/></svg>`}<span class="t">AB_Player</span>${x}</button>
        <button class="doc bp">${html`<svg width="16" height="16" viewBox="0 0 16 16"><path fill="#1c2733" d="M0 0h16v16H0z"/><path d="M2 5V2h3M11 2h3v3M14 11v3h-3M5 14H2v-3" fill="none" stroke="#9cc4ea"/><path d="M5 5l3 3 3 3M8 5v4" stroke="#9cc4ea" stroke-width="1.500"/></svg>`}<span class="t">BP_Player</span>${x}</button>
        <div class="wins"><span class="cap">${cap}</span>
          <button aria-label="Minimize"><svg width="11" height="10" viewBox="0 0 11 10"><path fill="#fff" d="M0 7h11v3H0z"/></svg></button>
          <button aria-label="Restore"><svg width="11" height="11" viewBox="0 0 11 11"><path d="M3.500 3V1H10v6H8M1 3.500h6.500V10H1z" fill="none" stroke="#fff" stroke-width="1.800"/></svg></button>
          <button class="close" aria-label="Close"><svg width="11" height="10" viewBox="0 0 11 10"><path d="M1 0l9 10M10 0L1 10" stroke="#fff" stroke-width="3"/></svg></button>
        </div>
      </header>
      <nav class="menu"><button>File</button><button>Edit</button><button>Asset</button><button>Window</button><button>Help</button>
        <span class="parent">Parent class: <a href="#">Paper ZDAnim Instance</a></span></nav>
      <main class="main">
        <my-blueprint></my-blueprint>
        <section class="mid">
          <div class="bar">
            ${tool(compileIcon, 'Compile', 'wide')}<button class="drop" aria-label="Compile options">${caret()}</button><span class="line"></span>
            ${tool(saveIcon, 'Save')}${tool(browseIcon, 'Browse')}<span class="line"></span>
            ${tool(findIcon, 'Find')}${tool(hideIcon, 'Hide Unrelated', 'xwide')}<button class="drop" aria-label="Hide options">${caret()}</button><span class="line"></span>
            <svg class="grow" width="16" height="18" viewBox="0 0 16 18"><path d="M1 1l7 8-7 8M8 1l7 8-7 8" fill="none" stroke="#fff" stroke-width="1.800"/></svg>
            <button class="mode bp-mode"><i>${runIcon}</i>Blueprints</button>
            <button class="drop small" aria-label="Blueprint modes">${caret()}</button>
            <svg class="next" width="9" height="20" viewBox="0 0 9 20"><path d="M1.500 1l5.500 9-5.500 9" fill="none" stroke="#eee" stroke-width="2.200"/></svg>
            <button class="mode"><i>${boxIcon}</i>Animations</button>
          </div>
          <div class="tabs gtabs">
            <div class="tab on">${graphIcon(16)}<span class="t">Event Graph</span>${x}</div>
            <div class="tab">${machineIcon}<span class="t">Locomotion</span>${x}</div>
            <div class="tab">${machineIcon}<span class="t">Locomotion</span>${x}</div>
          </div>
          <div class="frame"><graph-canvas></graph-canvas></div>
          <div class="tabs ctabs"><div class="tab">${scriptIcon}<span class="t">Compiler Results</span>${x}</div></div>
          <div class="results">
            <div class="log"><b></b><span>[2854.55] Compile of AB_Player successful! [in 46 ms] (/Game/PaperZD/AB_Player.AB_Player)</span></div>
            <button class="clear">Clear</button>
          </div>
        </section>
        <details-panel></details-panel>
      </main>
      <task-bar></task-bar>
      <div class="ghost"><span><b></b>Restore</span><span><b></b>Move</span><span><b></b>Size</span><span><b>–</b>Minimize</span><span><b>▫</b>Maximize</span><span class="x"><b>x</b>Close<em>Alt+F4</em></span></div>`;
  }
}
